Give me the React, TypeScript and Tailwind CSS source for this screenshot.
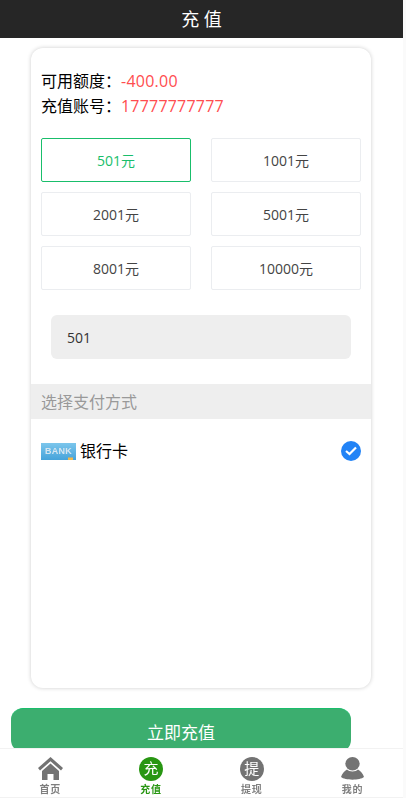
import React from 'react';

const FONT = '"Open Sans", "Noto Sans CJK SC", sans-serif';

const amounts = ['501元', '1001元', '2001元', '5001元', '8001元', '10000元'];

function HomeIcon() {
  return (
    <svg width="25" height="23" viewBox="0 0 25 23" fill="#737373">
      <path d="M12.5 0 L25 11 L23 13.4 L12.5 4.2 L2 13.4 L0 11 Z" />
      <path d="M4 14 L12.5 6.6 L21 14 V23 H15.5 V17 H9.5 V23 H4 Z" />
    </svg>
  );
}

function UserIcon() {
  return (
    <svg width="23" height="23" viewBox="0 0 23 23" fill="#737373">
      <ellipse cx="11.5" cy="6.8" rx="7.2" ry="6.8" />
      <path d="M6 12.5 C8 15 15 15 17 12.5 C20 14 22 17 23 20 C19 23.5 4 23.5 0 20 C1 17 3 14 6 12.5 Z" />
    </svg>
  );
}

function TabCircle({ label, active }: { label: string; active?: boolean }) {
  return (
    <div className={`flex h-6 w-6 items-center justify-center rounded-full text-[15px] leading-none text-white ${active ? 'bg-[#289612]' : 'bg-[#737373]'}`}>
      {label}
    </div>
  );
}

export default function App() {
  return (
    <div className="flex h-[798px] w-[406px] overflow-hidden bg-white" style={{ fontFamily: FONT }}>
      <div className="relative h-full w-[403px]">
        {/* Header */}
        <div className="flex h-[38px] items-center justify-center bg-[#262626] text-[18px] text-white">
          充 值
        </div>

        {/* Card */}
        <div className="ml-[31px] mt-[10px] flex h-[640px] w-[340px] flex-col rounded-xl bg-white shadow-[0_0_4px_rgba(0,0,0,0.2)]">
          <div className="px-[10px] pt-[21px] text-[16px] leading-[25px] text-black">
            <div className="flex items-center">
              可用额度：<span className="tracking-[0.25px] text-[#ff4d4f]">-400.00</span>
            </div>
            <div className="flex items-center">
              充值账号：<span className="tracking-[0.2px] text-[#ff4d4f]">17777777777</span>
            </div>
          </div>

          <div className="mt-[19px] grid grid-cols-2 gap-x-[20px] gap-y-[10px] px-[10px]">
            {amounts.map((amount, i) => (
              <div
                key={amount}
                className={`flex h-[44px] items-center justify-center rounded-[2px] border text-[14px] ${
                  i === 0 ? 'border-[#19be6b] text-[#19be6b]' : 'border-[#ebedf0] text-[#444]'
                }`}
              >
                {amount}
              </div>
            ))}
          </div>

          <div className="mx-[20px] mt-[25px] flex h-[44px] items-center rounded-md bg-[#eeeeee] px-4 text-[14px] text-[#333]">
            501
          </div>

          <div className="mt-[25px] flex h-[35px] items-center bg-[#eeeeee] px-[10px] text-[16px] text-[#999]">
            选择支付方式
          </div>

          <div className="mt-[22px] flex items-center px-[10px]">
            <svg className="blur-[0.3px]" width="35" height="17" viewBox="0 0 35 17">
              <defs>
                <linearGradient id="bank" x1="0" y1="0" x2="0" y2="1">
                  <stop offset="0" stopColor="#7cc6ec" />
                  <stop offset="1" stopColor="#46a3da" />
                </linearGradient>
              </defs>
              <rect width="35" height="17" fill="url(#bank)" />
              <rect x="27" y="14.5" width="5" height="2.5" fill="#f2b84b" />
              <text x="17.5" y="11" textAnchor="middle" fontSize="9" fontWeight="700" letterSpacing="0.3" fill="#d5e5f0" fontFamily="Liberation Sans, sans-serif">BANK</text>
            </svg>
            <span className="ml-[4px] text-[16px] leading-[20px] text-black">银行卡</span>
            <div className="ml-auto flex h-5 w-5 items-center justify-center rounded-full bg-[#2283f6]">
              <svg width="12" height="10" viewBox="0 0 12 10" fill="none" stroke="white" strokeWidth="2.2">
                <path d="M1 5 L4.5 8 L11 1.5" />
              </svg>
            </div>
          </div>
        </div>

        {/* Submit */}
        <div className="ml-[11px] mt-[20px] flex h-[44px] w-[340px] items-center justify-center rounded-xl border-t border-[#19be6b] bg-[#3cae6f] pt-1 text-[17px] text-white">
          立即充值
        </div>

        {/* Tab bar */}
        <div className="absolute bottom-0 left-0 grid h-[50px] w-full grid-cols-4 border-y border-[#f2f2f2] bg-white">
          {[
            { label: '首页', icon: <HomeIcon /> },
            { label: '充值', icon: <TabCircle label="充" active />, active: true },
            { label: '提现', icon: <TabCircle label="提" /> },
            { label: '我的', icon: <UserIcon /> },
          ].map((tab) => (
            <div key={tab.label} className="flex flex-col items-center pt-[8px] blur-[0.3px]">
              <div className="flex h-[23px] items-center">{tab.icon}</div>
              <span className={`mt-[3px] text-[10px] font-bold leading-[12px] tracking-[1px] ${tab.active ? 'text-[#289612]' : 'text-[#7f7f7f]'}`}>
                {tab.label}
              </span>
            </div>
          ))}
        </div>
      </div>
      <div className="h-full flex-1 bg-[#fafafa]" />
    </div>
  );
}
